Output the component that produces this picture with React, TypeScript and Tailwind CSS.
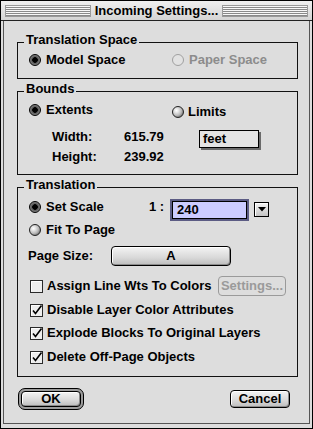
import React from "react";

const font = "font-['Liberation_Sans',Arial,sans-serif] font-bold text-[13px] leading-[16px] text-black";

const Radio = ({ checked, disabled }: { checked?: boolean; disabled?: boolean }) => {
  if (disabled) {
    return <span className="w-[12px] h-[12px] rounded-full border border-[#a0a0a0] bg-[#e2e2e2] shrink-0" />;
  }
  if (checked) {
    return (
      <span className="w-[12px] h-[12px] rounded-full border border-black bg-[radial-gradient(circle_at_50%_50%,#000_0px,#000_2.5px,#555_3px,#777_4.5px,#999_6px)] shrink-0" />
    );
  }
  return (
    <span className="w-[12px] h-[12px] rounded-full border border-[#222] bg-[radial-gradient(circle_at_35%_35%,#ffffff_0px,#e6e6e6_2px,#b8b8b8_5px,#7c7c7c_7px)] shrink-0" />
  );
};

const Check = ({ checked }: { checked?: boolean }) => (
  <svg width="14" height="13" viewBox="0 0 14 13" className="shrink-0 overflow-visible">
    <rect x="0.5" y="0.5" width="12" height="12" fill="#eeeeee" stroke="#2a2a2a" />
    <path d="M1.5 1.5 H11.5" stroke="#ffffff" />
    <path d="M1.5 1.5 V11.5" stroke="#ffffff" />
    {checked && <path d="M3 6.5 L5.5 9.5 L11.5 1.5" fill="none" stroke="#000" strokeWidth="1.6" />}
  </svg>
);

const PushButton = ({ label, className, disabled }: { label: string; className: string; disabled?: boolean }) => (
  <div
    className={
      "flex items-center justify-center rounded-[4px] border " +
      (disabled
        ? "border-[#9a9a9a] bg-[#dddddd] text-[#9a9a9a] "
        : "border-black bg-[linear-gradient(to_bottom,#f4f4f4,#d8d8d8_60%,#bdbdbd)] shadow-[inset_1px_1px_0_#ffffff,inset_-1px_-1px_0_#8c8c8c] ") +
      className
    }
  >
    {label}
  </div>
);

// group box, padding goes on the inner div so the legend keeps its own offset
const Group = ({ title, className, children }: { title: string; className: string; children: React.ReactNode }) => (
  <fieldset className="mx-0 min-w-0 border border-[#111] p-0 mt-[4px] first:mt-[13px]">
    <legend className="ml-[6px] px-[2px] leading-[12px] pb-[4px]">{title}</legend>
    <div className={"pl-[11px] " + className}>{children}</div>
  </fieldset>
);

const App: React.FC = () => {
  return (
    <div className={"w-[313px] h-[429px] border border-black bg-[#dddddd] flex flex-col " + font}>
      {/* title bar */}
      <div className="h-[20px] border-b border-[#222] flex items-center px-[4px] bg-[linear-gradient(to_bottom,#f0f0f0,#d4d4d4)]">
        <div className="flex-1 h-[12px] border border-[#9a9a9a] bg-[repeating-linear-gradient(to_bottom,#f8f8f8_0px,#f8f8f8_1px,#8a8a8a_1px,#8a8a8a_2px)]" />
        <span className="px-[4px]">Incoming Settings...</span>
        <div className="flex-1 h-[12px] border border-[#9a9a9a] bg-[repeating-linear-gradient(to_bottom,#f8f8f8_0px,#f8f8f8_1px,#8a8a8a_1px,#8a8a8a_2px)]" />
      </div>

      {/* body frame */}
      <div className="flex-1 mx-[2px] mb-[4px] border-x border-b border-[#555] flex flex-col pl-[13px] pr-[11px]">
        <Group title="Translation Space" className="pt-[2px] pb-[10px]">
          <div className="flex items-center">
            <div className="w-[143px] flex items-center gap-[5px]">
              <Radio checked />
              <span>Model Space</span>
            </div>
            <div className="flex items-center gap-[5px] text-[#8c8c8c]">
              <Radio disabled />
              <span>Paper Space</span>
            </div>
          </div>
        </Group>

        <Group title="Bounds" className="pt-[3px] pb-[9px]">
          <div className="flex items-start">
            <div className="w-[143px] flex items-center gap-[5px]">
              <Radio checked />
              <span>Extents</span>
            </div>
            <div className="flex items-center gap-[4px] mt-[2px]">
              <Radio />
              <span>Limits</span>
            </div>
          </div>
          <div className="flex items-start mt-[8px] h-[20px]">
            <span className="ml-[23px] w-[72px] mt-[1px]">Width:</span>
            <span className="w-[75px] mt-[1px]">615.79</span>
            <div className="mt-[2px] w-[60px] h-[18px] border border-black bg-[#e4e4e4] shadow-[2px_2px_0_#6a6a6a] pl-[3px] leading-[16px]">
              feet
            </div>
          </div>
          <div className="flex items-start mt-[1px]">
            <span className="ml-[23px] w-[72px]">Height:</span>
            <span>239.92</span>
          </div>
        </Group>

        <Group title="Translation" className="pt-[2px] pb-[11px]">
          <div className="flex items-start h-[24px]">
            <div className="w-[120px] flex items-center gap-[5px] mt-[2px]">
              <Radio checked />
              <span>Set Scale</span>
            </div>
            <span className="mt-[2px] w-[21px]">1 :</span>
            <div className="mt-[2px] w-[79px] h-[22px] border-2 border-[#5c5c84] flex">
              <div className="flex-1 border border-black bg-[#ccccff] pl-[4px] leading-[16px]">240</div>
            </div>
            <div className="mt-[5px] ml-[5px] w-[15px] h-[15px] border border-black bg-[linear-gradient(to_bottom,#f4f4f4,#c4c4c4)] flex items-center justify-center shadow-[inset_1px_1px_0_#fff]">
              <svg width="8" height="5" viewBox="0 0 8 5">
                <path d="M0 0 H8 L4 4.5 Z" fill="#000" />
              </svg>
            </div>
          </div>
          <div className="flex items-center gap-[5px] mt-[1px]">
            <Radio />
            <span>Fit To Page</span>
          </div>
          <div className="flex items-center h-[20px] mt-[8px]">
            <span className="ml-[-1px] w-[83px]">Page Size:</span>
            <PushButton label="A" className="w-[120px] h-[20px]" />
          </div>
          <div className="flex items-center h-[20px] mt-[10px] pl-[1px]">
            <div className="w-[188px] flex items-center gap-[3px]">
              <Check />
              <span>Assign Line Wts To Colors</span>
            </div>
            <PushButton label="Settings..." disabled className="w-[68px] h-[20px]" />
          </div>
          <div className="flex items-center gap-[3px] mt-[6px] pl-[1px]">
            <Check checked />
            <span>Disable Layer Color Attributes</span>
          </div>
          <div className="flex items-center gap-[3px] mt-[7px] pl-[1px]">
            <Check checked />
            <span>Explode Blocks To Original Layers</span>
          </div>
          <div className="flex items-center gap-[3px] mt-[8px] pl-[1px]">
            <Check checked />
            <span>Delete Off-Page Objects</span>
          </div>
        </Group>

        <div className="flex items-center justify-between mt-[11px] h-[22px] pl-[1px] pr-[8px]">
          <div className="w-[66px] h-[22px] rounded-[7px] border border-black bg-[#9c9c9c] p-[2px] flex">
            <PushButton label="OK" className="flex-1" />
          </div>
          <PushButton label="Cancel" className="w-[60px] h-[18px]" />
        </div>
      </div>
    </div>
  );
};

export default App;
